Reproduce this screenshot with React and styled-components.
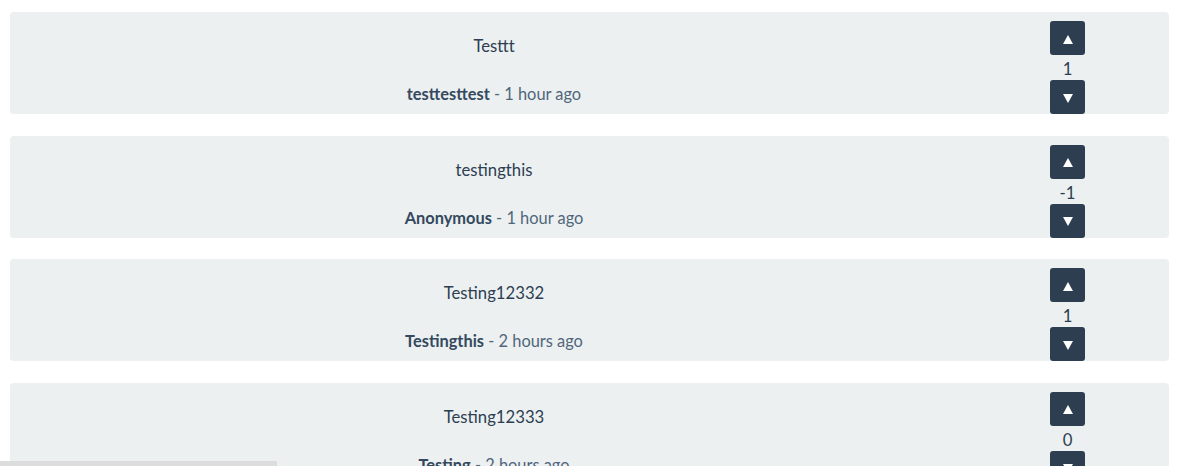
import React from "react";
import styled, { createGlobalStyle } from "styled-components";

const GlobalStyle = createGlobalStyle`
  body {
    margin: 0;
    background: #ffffff;
    font-family: Lato, "Open Sans", sans-serif;
    color: #2c3e50;
  }
`;

const Feed = styled.div`
  padding: 12px 18px 0 10px;
  display: flex;
  flex-direction: column;
  gap: 21.5px;
`;

const Card = styled.div`
  height: 102px;
  background: #ecf0f1;
  border-radius: 4px;
  display: flex;
`;

const Body = styled.div`
  width: 968px;
  padding-top: 22px;
  display: flex;
  flex-direction: column;
  align-items: center;
  gap: 24px;
  line-height: 24px;
`;

const Title = styled.div`
  font-size: 16.7px;
  color: #2c3e50;
`;

const Meta = styled.div`
  font-size: 16.4px;
  color: #50667b;
`;

const Author = styled.span`
  font-weight: 700;
  color: #34495e;
`;

const Votes = styled.div`
  flex: 1;
  padding: 9px 12px 0 0;
  display: flex;
  flex-direction: column;
  align-items: center;
`;

const VoteButton = styled.button`
  width: 35px;
  height: 35px;
  padding: 0;
  border: none;
  border-radius: 3px;
  background: #2c3e50;
  display: flex;
  align-items: center;
  justify-content: center;
  cursor: pointer;
  svg {
    margin-top: 2px;
  }
`;

const Count = styled.div`
  height: 25px;
  line-height: 28px;
  font-size: 16.7px;
  color: #2c3e50;
`;

const ScrollThumb = styled.div`
  position: fixed;
  left: 0;
  bottom: 0;
  width: 277px;
  height: 5px;
  background: #dcdcdc;
`;

const Arrow = ({ down }) => (
  <svg width="10" height="9" viewBox="0 0 10 9">
    <polygon
      points={down ? "0,0 10,0 5,9" : "5,0 10,9 0,9"}
      fill="#ffffff"
    />
  </svg>
);

const posts = [
  { title: "Testtt", author: "testtesttest", time: "1 hour ago", score: 1 },
  { title: "testingthis", author: "Anonymous", time: "1 hour ago", score: -1 },
  { title: "Testing12332", author: "Testingthis", time: "2 hours ago", score: 1 },
  { title: "Testing12333", author: "Testing", time: "2 hours ago", score: 0 },
];

export default function App() {
  return (
    <>
      <GlobalStyle />
      <Feed>
        {posts.map((p) => (
          <Card key={p.title}>
            <Body>
              <Title>{p.title}</Title>
              <Meta>
                <Author>{p.author}</Author> - {p.time}
              </Meta>
            </Body>
            <Votes>
              <VoteButton aria-label="upvote">
                <Arrow />
              </VoteButton>
              <Count>{p.score}</Count>
              <VoteButton aria-label="downvote">
                <Arrow down />
              </VoteButton>
            </Votes>
          </Card>
        ))}
      </Feed>
      <ScrollThumb />
    </>
  );
}
